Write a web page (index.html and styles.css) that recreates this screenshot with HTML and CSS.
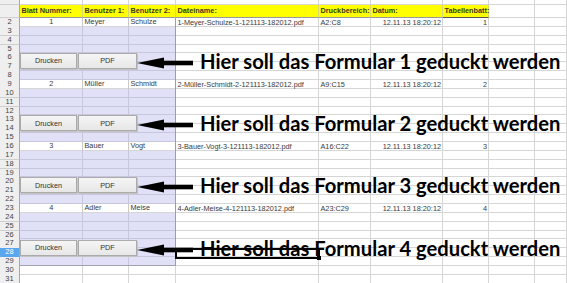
FILE: index.html
```html
<!DOCTYPE html>
<html lang="de">
<head>
<meta charset="utf-8">
<title>Formulare</title>
<link rel="stylesheet" href="styles.css">
</head>
<body>
<div class="sheet">
  <div class="row top"><span class="rh"></span></div>
  <div class="row head"><span class="rh"></span><span class="c h">Blatt Nummer:</span><span class="c h">Benutzer 1:</span><span class="c h">Benutzer 2:</span><span class="c h">Dateiname:</span><span class="c h">Druckbereich:</span><span class="c h">Datum:</span><span class="c h last">Tabellenbatt:</span></div>

  <div class="row data"><span class="rh">2</span><span class="c ctr">1</span><span class="c">Meyer</span><span class="c">Schulze</span><span class="c">1-Meyer-Schulze-1-121113-182012.pdf</span><span class="c">A2:C8</span><span class="c r">12.11.13 18:20:12</span><span class="c r">1</span></div>
  <div class="row lav"><span class="rh">3</span></div>
  <div class="row lav"><span class="rh">4</span></div>
  <div class="row lav"><span class="rh">5</span></div>
  <div class="row lav"><span class="rh">6</span></div>
  <div class="row lav"><span class="rh">7</span></div>
  <div class="row lav"><span class="rh">8</span></div>

  <div class="row data"><span class="rh">9</span><span class="c ctr">2</span><span class="c">Müller</span><span class="c">Schmidt</span><span class="c">2-Müller-Schmidt-2-121113-182012.pdf</span><span class="c">A9:C15</span><span class="c r">12.11.13 18:20:12</span><span class="c r">2</span></div>
  <div class="row lav"><span class="rh">10</span></div>
  <div class="row lav"><span class="rh">11</span></div>
  <div class="row lav"><span class="rh">12</span></div>
  <div class="row lav"><span class="rh">13</span></div>
  <div class="row lav"><span class="rh">14</span></div>
  <div class="row lav"><span class="rh">15</span></div>

  <div class="row data"><span class="rh">16</span><span class="c ctr">3</span><span class="c">Bauer</span><span class="c">Vogt</span><span class="c">3-Bauer-Vogt-3-121113-182012.pdf</span><span class="c">A16:C22</span><span class="c r">12.11.13 18:20:12</span><span class="c r">3</span></div>
  <div class="row lav"><span class="rh">17</span></div>
  <div class="row lav"><span class="rh">18</span></div>
  <div class="row lav"><span class="rh">19</span></div>
  <div class="row lav"><span class="rh">20</span></div>
  <div class="row lav"><span class="rh">21</span></div>
  <div class="row lav"><span class="rh">22</span></div>

  <div class="row data"><span class="rh">23</span><span class="c ctr">4</span><span class="c">Adler</span><span class="c">Meise</span><span class="c">4-Adler-Meise-4-121113-182012.pdf</span><span class="c">A23:C29</span><span class="c r">12.11.13 18:20:12</span><span class="c r">4</span></div>
  <div class="row lav"><span class="rh">24</span></div>
  <div class="row lav"><span class="rh">25</span></div>
  <div class="row lav"><span class="rh">26</span></div>
  <div class="row lav"><span class="rh">27</span></div>
  <div class="row lav"><span class="rh sel">28</span></div>
  <div class="row lav end"><span class="rh">29</span></div>
  <div class="row"><span class="rh">30</span></div>
  <div class="row"><span class="rh">31</span></div>
</div>

<div class="form f1">
  <span class="btn b1">Drucken</span><span class="btn b2">PDF</span>
  <svg class="arrow" viewBox="0 0 56 12"><polygon points="0,6 27,0.5 27,11.5"/><rect x="25" y="3.7" width="31" height="4.6"/></svg>
  <span class="msg">Hier soll das Formular 1 geduckt werden</span>
</div>
<div class="form f2">
  <span class="btn b1">Drucken</span><span class="btn b2">PDF</span>
  <svg class="arrow" viewBox="0 0 56 12"><polygon points="0,6 27,0.5 27,11.5"/><rect x="25" y="3.7" width="31" height="4.6"/></svg>
  <span class="msg">Hier soll das Formular 2 geduckt werden</span>
</div>
<div class="form f3">
  <span class="btn b1">Drucken</span><span class="btn b2">PDF</span>
  <svg class="arrow" viewBox="0 0 56 12"><polygon points="0,6 27,0.5 27,11.5"/><rect x="25" y="3.7" width="31" height="4.6"/></svg>
  <span class="msg">Hier soll das Formular 3 geduckt werden</span>
</div>
<div class="form f4">
  <span class="btn b1">Drucken</span><span class="btn b2">PDF</span>
  <svg class="arrow" viewBox="0 0 56 12"><polygon points="0,6 27,0.5 27,11.5"/><rect x="25" y="3.7" width="31" height="4.6"/></svg>
  <span class="msg">Hier soll das Formular 4 geduckt werden</span>
</div>
<div class="cursor"></div>
</body>
</html>
```

FILE: styles.css
```css
* { box-sizing: border-box; margin: 0; padding: 0; }

body {
  width: 567px;
  height: 283px;
  overflow: hidden;
  position: relative;
  background: #fff;
  font-family: "Liberation Sans", Arial, sans-serif;
}

.sheet {
  display: flex;
  flex-direction: column;
}

.row {
  --g: linear-gradient(#d6d6d6, #d6d6d6);
  --lines: var(--g), var(--g), var(--g), var(--g), var(--g), var(--g), var(--g), var(--g), var(--g), var(--g);
  --pos: 0 100%, 82px 0, 128px 0, 175px 0, 318px 0, 370px 0, 442px 0, 488px 0, 534px 0, 566px 0;
  --size: 100% 1px, 1px 100%, 1px 100%, 1px 100%, 1px 100%, 1px 100%, 1px 100%, 1px 100%, 1px 100%, 1px 100%;
  display: grid;
  grid-template-columns: 20px 63px 46px 47px 143px 52px 72px 46px 46px 32px;
  height: 8.86px;
  font-size: 7.3px;
  color: #3a3a3a;
  background-image: var(--lines);
  background-position: var(--pos);
  background-size: var(--size);
  background-repeat: no-repeat;
}

.row.lav {
  --lg: linear-gradient(#c6c6dc, #c6c6dc);
  background-image: linear-gradient(#9c9cab, #9c9cab), var(--lg), var(--lg), var(--lg), var(--g), var(--g), var(--g), var(--g), var(--g), var(--g), var(--g), linear-gradient(#e0e0f7, #e0e0f7);
  background-position: 175px 0, 20px 100%, 82px 0, 128px 0, 176px 100%, 318px 0, 370px 0, 442px 0, 488px 0, 534px 0, 566px 0, 20px 0;
  background-size: 1px 100%, 156px 1px, 1px 100%, 1px 100%, 391px 1px, 1px 100%, 1px 100%, 1px 100%, 1px 100%, 1px 100%, 1px 100%, 156px 100%;
}

.row.lav.end {
  background-image: linear-gradient(#9c9cab, #9c9cab), linear-gradient(#a0a0b0, #a0a0b0), var(--lg), var(--lg), var(--g), var(--g), var(--g), var(--g), var(--g), var(--g), var(--g), linear-gradient(#e0e0f7, #e0e0f7);
}

.row.top {
  height: 4.5px;
}

.row.head {
  height: 13.5px;
  background-image: var(--g), var(--g), var(--g);
  background-position: 0 100%, 534px 0, 566px 0;
  background-size: 100% 1px, 1px 100%, 1px 100%;
}

.rh {
  background: #efefef;
  border-right: 1px solid #a8a8a8;
  border-bottom: 1px solid #cfcfcf;
  color: #444;
  font-size: 7.5px;
  line-height: 8.5px;
  text-align: center;
}

.rh.sel {
  background: #5aa6ee;
  color: #fff;
}

.c {
  display: flex;
  align-items: flex-end;
  padding: 0 1px 1px 1.5px;
  line-height: 8px;
  white-space: nowrap;
}

.c.ctr { justify-content: center; }
.c.r { justify-content: flex-end; padding-right: 2px; }

.data .c:nth-child(-n+4) {
  border-bottom: 1px solid #a3a3a3;
  border-right: 1px solid #cacaca;
}
.data .c:nth-child(4) { border-right-color: #9c9cab; }

.head .c.h {
  background: #ffff00;
  font-weight: bold;
  color: #3a3a1a;
  border-right: 1px solid #d8d870;
  border-bottom: 1px solid #9a9a9a;
  padding-bottom: 2px;
}
.head .c.last { border-bottom-color: #555; }

/* drawn form objects lying over the sheet */
.form {
  position: absolute;
  left: 20px;
  height: 16px;
  display: flex;
  align-items: center;
}
.f1 { top: 52.5px; }
.f2 { top: 115px; }
.f3 { top: 177px; }
.f4 { top: 239.5px; }

.btn {
  height: 16px;
  display: flex;
  align-items: center;
  justify-content: center;
  border: 1px solid #ababab;
  background: linear-gradient(#f5f5f5, #e7e7e7);
  box-shadow: 1px 1px 0 #c4c4c4;
  font-size: 7.3px;
  color: #333;
}
.b1 { width: 57px; }
.b2 { width: 59px; margin-left: 1px; }

.arrow {
  width: 56px;
  height: 12px;
  margin-top: 4px;
  fill: #000;
  flex: none;
}

.msg {
  margin-left: 7px;
  font-family: Lato, "Liberation Sans", sans-serif;
  font-weight: bold;
  font-size: 20.2px;
  line-height: 20px;
  color: #000;
  white-space: nowrap;
}

.cursor {
  position: absolute;
  left: 175px;
  top: 247.5px;
  width: 145px;
  height: 11px;
  border: 2px solid #000;
}
.cursor::after {
  content: "";
  position: absolute;
  right: -3px;
  bottom: -3px;
  width: 4px;
  height: 4px;
  background: #000;
}
```
